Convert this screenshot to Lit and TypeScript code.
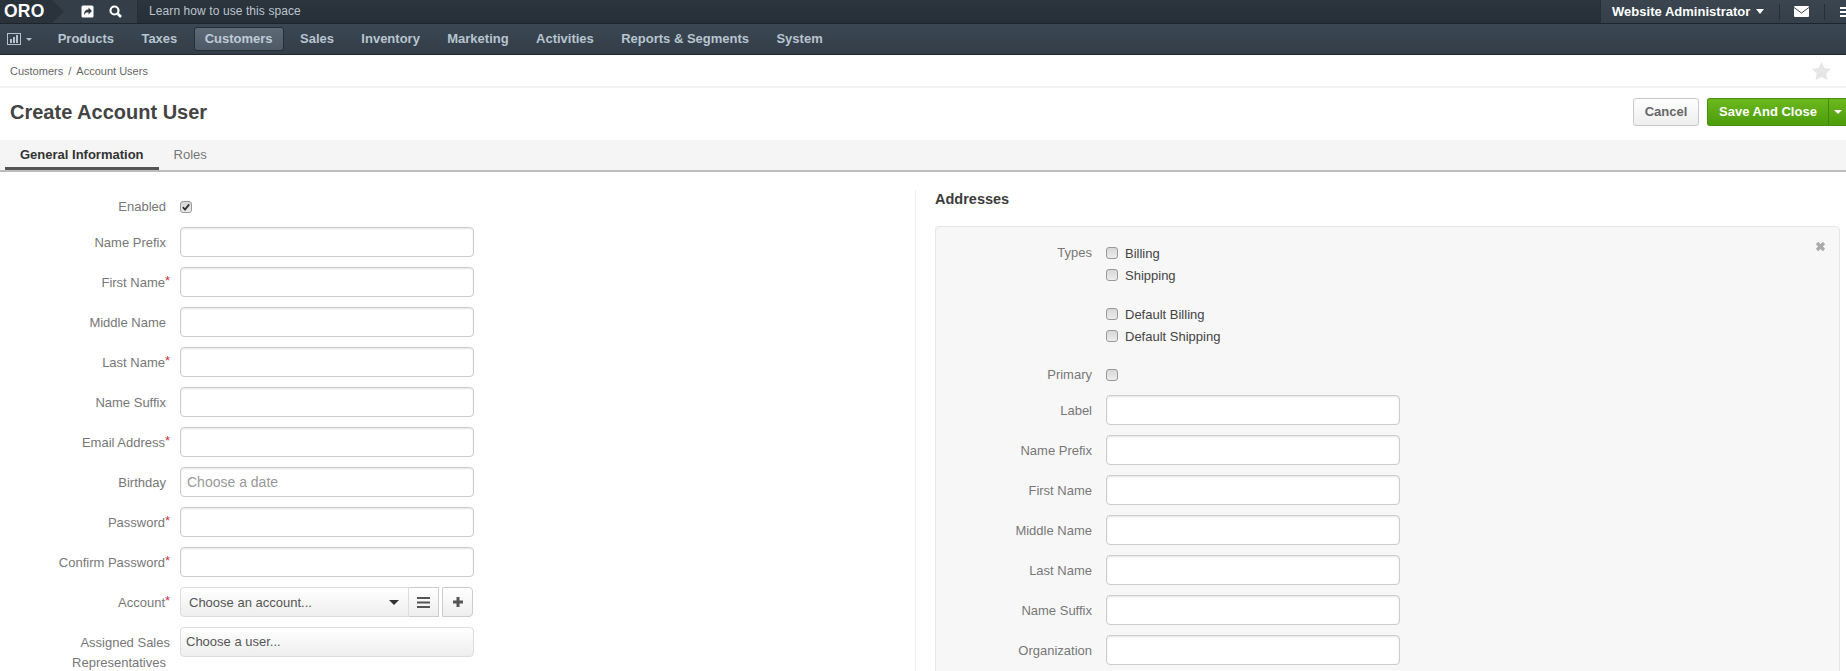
import { LitElement, html, css, svg } from "lit";
import { customElement } from "lit/decorators.js";

const icoCheck = svg`<svg class="tick" viewBox="0 0 12 12"><path d="M2.200 6.200 L4.800 9 L9.800 2.800" fill="none" stroke="#333" stroke-width="2.200"/></svg>`;

@customElement("app-root")
export class AppRoot extends LitElement {
  static styles = css`
    :host { display:block; height:671px; overflow:hidden; font-family:"Liberation Sans",Arial,sans-serif; font-size:13px; color:#444; background:#fff; }
    * { box-sizing:border-box; }
    .top { height:24px; display:flex; background:linear-gradient(#2c353d,#262f37); border-bottom:1px solid #1d252c; }
    .brand { width:138px; display:flex; align-items:center; position:relative; background:#343e48; border-right:1px solid #262f37; overflow:hidden; flex:none; }
    .logo { position:absolute; left:0; top:0; height:23px; width:64px; background:#2a333b; clip-path:polygon(0 0,52px 0,64px 11.5px,52px 23px,0 23px); }
    .logotxt { position:relative; margin-left:4px; font-weight:700; font-size:17.5px; color:#fff; width:77px; letter-spacing:.2px; }
    .brand svg { display:block; position:relative; flex:none; }
    .brand .s2 { margin-left:15px; }
    .learn { margin-left:11px; color:#bcc5ce; font-size:12px; line-height:23px; flex:1; letter-spacing:.09px; }
    .user { width:246px; flex:none; display:flex; align-items:center; background:linear-gradient(#3a4550,#343f4a); border-left:1px solid #262f37; padding-left:11px; overflow:hidden; }
    .uname { color:#fff; font-weight:700; font-size:13px; white-space:nowrap; flex:none; width:138px; letter-spacing:.02px; }
    .caret { display:block; width:0; height:0; flex:none; border-left:4.5px solid transparent; border-right:4.5px solid transparent; border-top:5px solid #fff; margin-left:6px; }
    .vsep { width:1px; height:16px; background:#262f37; flex:none; }
    .u1 { margin-left:15px; }
    .env { margin:0 15px 0 14px; display:block; flex:none; }
    .burger { margin-left:15px; width:10px; height:10px; display:flex; flex-direction:column; justify-content:space-between; flex:none; }
    .burger i { display:block; height:2px; background:#fff; }

    .nav { height:31px; display:flex; align-items:center; background:linear-gradient(#3b4752,#323d48); border-bottom:1px solid #1f2730; padding-left:7px; }
    .chart { display:block; flex:none; }
    .ncaret { width:0; height:0; border-left:3px solid transparent; border-right:3px solid transparent; border-top:3.5px solid #b4c2cd; margin:0 12px 0 5px; }
    .item { color:#b7c5d0; font-weight:700; font-size:13px; padding:0 10px; height:24px; line-height:22px; margin:0 2.7px; border:1px solid transparent; border-radius:3px; white-space:nowrap; }
    .item.on { background:linear-gradient(#5d6a76,#4d5a66); border-color:#262f37; color:#bfccd6; }

    .crumb { height:33px; border-bottom:2px solid #f1f1f1; display:flex; align-items:center; justify-content:space-between; padding:0 15px 0 10px; font-size:11px; color:#666; }
    .crumb i { font-style:normal; margin:0 2px; }
    .star { display:block; }
    .head { height:52px; display:flex; align-items:center; justify-content:space-between; padding:0 0 5px 10px; }
    h1 { margin:2px 0 0; font-size:20px; font-weight:700; color:#444; }
    .btns { display:flex; gap:8px; margin-top:1px; }
    .btn { height:28px; line-height:26px; border-radius:3px; font-weight:700; font-size:13px; }
    .cancel { width:66px; text-align:center; color:#666; border:1px solid #c8c8c8; background:linear-gradient(#fff,#eee); }
    .save { width:139px; display:flex; color:#fff; border:1px solid #4a8f0e; border-right:0; border-radius:3px 0 0 3px; background:linear-gradient(#6cb81e,#4c9c0c); }
    .save b { width:121px; text-align:center; border-right:1px solid #3f8a0a; font-weight:700; }
    .save span { flex:1; display:flex; align-items:center; justify-content:center; }
    .save .caret { margin:0; border-left-width:4px; border-right-width:4px; border-top-width:4px; }

    .tabs { height:32px; display:flex; background:#f5f5f5; border-bottom:2px solid #bcbcbc; padding-left:5px; }
    .tab { padding:0 15px; line-height:29px; height:30px; color:#777; font-size:13px; }
    .tab.on { color:#333; font-weight:700; border-bottom:3px solid #555; }

    .body { display:flex; align-items:flex-start; height:500px; }
    .left { width:915px; flex:none; padding-top:25px; }
    .right { flex:1; margin-top:18px; border-left:1px solid #eee; padding:0 6px 0 19px; height:600px; }
    h2 { margin:0 0 18px; font-size:14.5px; line-height:18px; color:#3c3c3c; font-weight:700; }
    .panel { background:#f7f7f7; border:1px solid #e6e6e6; border-radius:4px; height:500px; padding-top:15px; position:relative; }
    .close { position:absolute; top:14px; right:13px; display:block; }

    .row { display:flex; gap:10px; margin-bottom:10px; min-height:30px; }
    .lab { width:170px; flex:none; text-align:right; color:#777; line-height:20px; padding-top:6px; white-space:nowrap; }
    .panel .row { gap:14px; }
    .panel .lab { width:156px; padding-right:0; }
    .sp { display:inline-block; width:4px; }
    .req { display:inline-block; width:5px; color:#c9304c; font-size:13px; line-height:10px; vertical-align:2px; text-align:left; }
    input { width:294px; height:30px; border:1px solid #ccc; border-radius:4px; background:#fff; box-shadow:inset 0 1px 2px rgba(0,0,0,.1); padding:0 6px; font:14px "Liberation Sans",Arial,sans-serif; color:#555; outline:none; }
    input::placeholder { color:#999; opacity:1; }
    .chk { width:12px; height:12px; border:1px solid #999; border-radius:3px; background:linear-gradient(#d8d8d8,#ececec); flex:none; display:block; }
    .tick { display:block; width:10px; height:10px; }
    .rowc { min-height:20px; align-items:center; }
    .rowc .lab { padding-top:0; }
    .sel { width:293px; height:30px; display:flex; }
    .selmain { flex:1; border:1px solid #ddd; border-radius:4px 0 0 4px; background:linear-gradient(#fff,#eee); display:flex; align-items:center; justify-content:space-between; padding:0 9px 0 8px; color:#555; }
    .darr { width:0; height:0; border-left:5px solid transparent; border-right:5px solid transparent; border-top:5px solid #333; }
    .sqb { width:30px; flex:none; border:1px solid #ccc; border-left:0; background:linear-gradient(#fff,#eee); display:flex; align-items:center; justify-content:center; }
    .sqb2 { width:31px; flex:none; margin-left:3px; border:1px solid #ccc; border-radius:0 4px 4px 0; background:linear-gradient(#fff,#eee); display:flex; align-items:center; justify-content:center; }
    .selone { width:294px; height:30px; border:1px solid #ddd; border-radius:4px; background:linear-gradient(#fff,#eee); line-height:28px; padding-left:5px; color:#555; }

    .checks { display:flex; flex-direction:column; }
    .c { height:22px; display:flex; align-items:center; gap:7px; color:#444; }
    .c span { padding-top:1px; }
    .grp1 { margin-bottom:17px; }
    .grp2 { margin-bottom:18px; }
    .panel .types { padding-top:1px; }
  `;

  lrow(name: string, req = false, placeholder = "") {
    return html`<div class="row">
      <div class="lab">${name}${req ? html`<span class="req">*</span>` : html`<span class="sp"></span>`}</div>
      <input type="text" placeholder=${placeholder} />
    </div>`;
  }

  prow(name: string) {
    return html`<div class="row"><div class="lab">${name}</div><input type="text" /></div>`;
  }

  cb(name: string) {
    return html`<div class="c"><div class="chk"></div><span>${name}</span></div>`;
  }

  render() {
    const nav = ["Products", "Taxes", "Customers", "Sales", "Inventory", "Marketing", "Activities", "Reports & Segments", "System"];
    return html`
      <div class="top">
        <div class="brand">
          <div class="logo"></div>
          <div class="logotxt">ORO</div>
          <svg width="13" height="13" viewBox="0 0 13 13"><path fill-rule="evenodd" fill="#fff" d="M2 .5h9A1.500 1.500 0 0 1 12.500 2v9A1.500 1.500 0 0 1 11 12.500H2A1.500 1.500 0 0 1 .5 11V2A1.500 1.500 0 0 1 2 .5ZM7.500 2.500V4.500C5 4.500 3 6 3 10 4 7.800 5.500 7.200 7.500 7.200V9.500L11 6Z"/></svg>
          <svg class="s2" width="13" height="13" viewBox="0 0 13 13"><circle cx="5.500" cy="5.500" r="4" fill="none" stroke="#fff" stroke-width="2.200"/><path d="M8.500 8.500 12 12" stroke="#fff" stroke-width="2.600"/></svg>
        </div>
        <div class="learn">Learn how to use this space</div>
        <div class="user">
          <span class="uname">Website Administrator</span><span class="caret"></span>
          <span class="vsep u1"></span>
          <svg class="env" width="15" height="11" viewBox="0 0 15 11"><rect width="15" height="11" rx="1" fill="#fff"/><path d="M0 1.500 7.500 7 15 1.500" fill="none" stroke="#3a4550" stroke-width="1"/></svg>
          <span class="vsep"></span>
          <span class="burger"><i></i><i></i><i></i></span>
        </div>
      </div>
      <div class="nav">
        <svg class="chart" width="14" height="12" viewBox="0 0 14 12"><rect x=".5" y=".5" width="13" height="11" fill="none" stroke="#b4c2cd"/><path d="M3 6h2v4H3zM6 4h2v6H6zM9 2h2v8H9z" fill="#b4c2cd"/></svg>
        <span class="ncaret"></span>
        ${nav.map((n) => html`<div class="item ${n === "Customers" ? "on" : ""}">${n}</div>`)}
      </div>
      <div class="crumb">
        <span>Customers<i> / </i>Account Users</span>
        <svg class="star" width="19" height="18" viewBox="0 0 19 18"><path d="M9.500 0 12.400 6 19 6.900 14.200 11.500 15.400 18 9.500 14.900 3.600 18 4.800 11.500 0 6.900 6.600 6Z" fill="#e6e6e6"/></svg>
      </div>
      <div class="head">
        <h1>Create Account User</h1>
        <div class="btns">
          <div class="btn cancel">Cancel</div>
          <div class="btn save"><b>Save And Close</b><span><i class="caret"></i></span></div>
        </div>
      </div>
      <div class="tabs">
        <div class="tab on">General Information</div>
        <div class="tab">Roles</div>
      </div>
      <div class="body">
        <div class="left">
          <div class="row rowc"><div class="lab">Enabled<span class="sp"></span></div><div class="chk">${icoCheck}</div></div>
          ${this.lrow("Name Prefix")}
          ${this.lrow("First Name", true)}
          ${this.lrow("Middle Name")}
          ${this.lrow("Last Name", true)}
          ${this.lrow("Name Suffix")}
          ${this.lrow("Email Address", true)}
          ${this.lrow("Birthday", false, "Choose a date")}
          ${this.lrow("Password", true)}
          ${this.lrow("Confirm Password", true)}
          <div class="row">
            <div class="lab">Account<span class="req">*</span></div>
            <div class="sel">
              <div class="selmain"><span>Choose an account...</span><i class="darr"></i></div>
              <div class="sqb"><svg width="13" height="11" viewBox="0 0 13 11"><path d="M0 1h13M0 5.500h13M0 10h13" stroke="#555" stroke-width="2"/></svg></div>
              <div class="sqb2"><svg width="12" height="12" viewBox="0 0 12 12"><path d="M6 1v10M1 6h10" stroke="#555" stroke-width="3"/></svg></div>
            </div>
          </div>
          <div class="row">
            <div class="lab">Assigned Sales<br />Representatives<span class="sp"></span></div>
            <div class="selone">Choose a user...</div>
          </div>
        </div>
        <div class="right">
          <h2>Addresses</h2>
          <div class="panel">
            <svg class="close" width="11" height="11" viewBox="0 0 11 11"><path d="M2 2 9 9M9 2 2 9" stroke="#aaa" stroke-width="3.200"/></svg>
            <div class="row grp1">
              <div class="lab types">Types</div>
              <div class="checks">${this.cb("Billing")}${this.cb("Shipping")}</div>
            </div>
            <div class="row grp2">
              <div class="lab"></div>
              <div class="checks">${this.cb("Default Billing")}${this.cb("Default Shipping")}</div>
            </div>
            <div class="row rowc"><div class="lab">Primary</div><div class="chk"></div></div>
            ${["Label", "Name Prefix", "First Name", "Middle Name", "Last Name", "Name Suffix", "Organization"].map((n) => this.prow(n))}
          </div>
        </div>
      </div>
    `;
  }
}
